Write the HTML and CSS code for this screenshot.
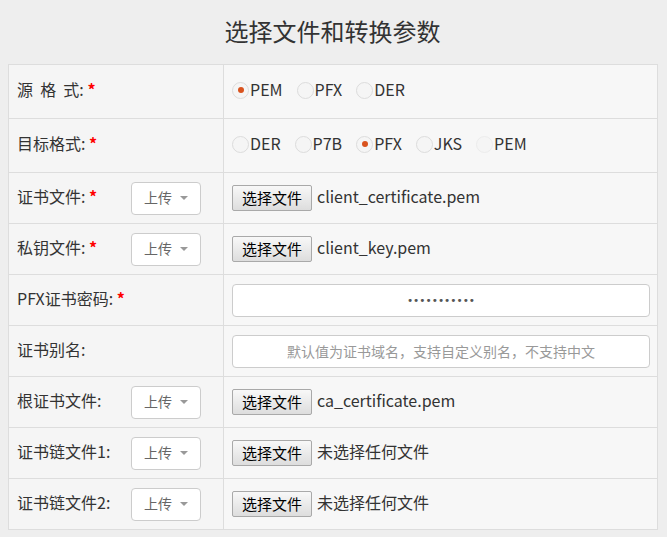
FILE: index.html
```html
<!DOCTYPE html>
<html lang="zh-CN">
<head>
    <meta charset="UTF-8">
    <meta name="viewport" content="width=device-width, initial-scale=1.0">
    <title>选择文件和转换参数</title>
    <link rel="stylesheet" href="styles.css">
</head>
<body>
    <h2 class="page-title">选择文件和转换参数</h2>

    <table class="form-table">
        <tr class="tall">
            <td class="label-cell"><span class="label">源&nbsp;&nbsp;格&nbsp;&nbsp;式: <span class="req">*</span></span></td>
            <td class="field-cell">
                <div class="radio-group">
                    <label class="radio"><span class="dot checked"></span>PEM</label>
                    <label class="radio"><span class="dot"></span>PFX</label>
                    <label class="radio"><span class="dot"></span>DER</label>
                </div>
            </td>
        </tr>
        <tr class="tall">
            <td class="label-cell"><span class="label">目标格式: <span class="req">*</span></span></td>
            <td class="field-cell">
                <div class="radio-group">
                    <label class="radio"><span class="dot"></span>DER</label>
                    <label class="radio"><span class="dot"></span>P7B</label>
                    <label class="radio"><span class="dot checked"></span>PFX</label>
                    <label class="radio"><span class="dot"></span>JKS</label>
                    <label class="radio"><span class="dot faint"></span>PEM</label>
                </div>
            </td>
        </tr>
        <tr>
            <td class="label-cell">
                <div class="label-row">
                    <span class="label">证书文件: <span class="req">*</span></span>
                    <div class="upload-select">上传 <span class="caret"></span></div>
                </div>
            </td>
            <td class="field-cell">
                <div class="file-row"><button class="file-btn">选择文件</button><span class="file-name">client_certificate.pem</span></div>
            </td>
        </tr>
        <tr>
            <td class="label-cell">
                <div class="label-row">
                    <span class="label">私钥文件: <span class="req">*</span></span>
                    <div class="upload-select">上传 <span class="caret"></span></div>
                </div>
            </td>
            <td class="field-cell">
                <div class="file-row"><button class="file-btn">选择文件</button><span class="file-name">client_key.pem</span></div>
            </td>
        </tr>
        <tr>
            <td class="label-cell"><span class="label">PFX证书密码: <span class="req">*</span></span></td>
            <td class="field-cell">
                <input class="text-input password" type="password" value="12345678901">
            </td>
        </tr>
        <tr>
            <td class="label-cell"><span class="label">证书别名:</span></td>
            <td class="field-cell">
                <input class="text-input" type="text" placeholder="默认值为证书域名，支持自定义别名，不支持中文">
            </td>
        </tr>
        <tr>
            <td class="label-cell">
                <div class="label-row">
                    <span class="label">根证书文件:</span>
                    <div class="upload-select">上传 <span class="caret"></span></div>
                </div>
            </td>
            <td class="field-cell">
                <div class="file-row"><button class="file-btn">选择文件</button><span class="file-name">ca_certificate.pem</span></div>
            </td>
        </tr>
        <tr>
            <td class="label-cell">
                <div class="label-row">
                    <span class="label">证书链文件1:</span>
                    <div class="upload-select">上传 <span class="caret"></span></div>
                </div>
            </td>
            <td class="field-cell">
                <div class="file-row"><button class="file-btn">选择文件</button><span class="file-name">未选择任何文件</span></div>
            </td>
        </tr>
        <tr>
            <td class="label-cell">
                <div class="label-row">
                    <span class="label">证书链文件2:</span>
                    <div class="upload-select">上传 <span class="caret"></span></div>
                </div>
            </td>
            <td class="field-cell">
                <div class="file-row"><button class="file-btn">选择文件</button><span class="file-name">未选择任何文件</span></div>
            </td>
        </tr>
    </table>
</body>
</html>
```

FILE: styles.css
```css
* {
    margin: 0;
    padding: 0;
    box-sizing: border-box;
}

body {
    background-color: #eeeeee;
    font-family: "Noto Sans CJK SC", "Noto Sans", sans-serif;
    color: #333;
    padding: 0 10px 0 8px;
}

.page-title {
    height: 64px;
    line-height: 62px;
    text-align: center;
    font-size: 24px;
    font-weight: normal;
    color: #333;
}

.form-table {
    width: 650px;
    border-collapse: collapse;
    border: 1px solid #dddddd;
}

.form-table td {
    border: 1px solid #dddddd;
    height: 51px;
    vertical-align: middle;
}

.form-table tr.tall td {
    height: 54px;
}

.label-cell {
    width: 215px;
    background-color: #f5f5f5;
    padding: 0 0 0 8px;
}

.field-cell {
    background-color: #f7f7f7;
    padding: 0 7px 0 8px;
}

.label {
    display: inline-block;
    font-size: 16px;
    color: #333;
    padding-bottom: 5px;
}

.req {
    color: #ff0000;
    font-weight: bold;
}

.label-row {
    display: flex;
    align-items: center;
}

.label-row .label {
    width: 114px;
}

.upload-select {
    width: 70px;
    height: 33px;
    background: #fff;
    border: 1px solid #cccccc;
    border-radius: 4px;
    font-size: 14px;
    color: #666;
    display: flex;
    align-items: center;
    padding: 0 0 2px 12px;
    gap: 8px;
}

.caret {
    width: 0;
    height: 0;
    margin-top: 2px;
    border-left: 4px solid transparent;
    border-right: 4px solid transparent;
    border-top: 4px solid #999;
}

/* radios */
.radio-group {
    display: flex;
    align-items: center;
    gap: 14px;
    padding-bottom: 5px;
}

.radio {
    display: flex;
    align-items: center;
    font-size: 16px;
    color: #333;
}

.dot {
    width: 17px;
    height: 17px;
    border: 1px solid #dcdcdc;
    border-radius: 50%;
    background: #f5f5f5;
    margin: 2px 1px 0 0;
    display: flex;
    justify-content: center;
    align-items: center;
}

.dot.checked::after {
    content: "";
    width: 6px;
    height: 6px;
    border-radius: 50%;
    background: #d9531e;
}

.dot.faint {
    border-color: #ececec;
}

/* file inputs */
.file-row {
    display: flex;
    align-items: center;
}

.file-btn {
    width: 80px;
    height: 26px;
    font-family: "Noto Sans CJK SC", sans-serif;
    font-size: 15px;
    color: #000;
    background: linear-gradient(#f8f8f8, #dddddd);
    border: 1px solid #a9a9a9;
    border-radius: 2px;
    margin-right: 5px;
    padding-bottom: 2px;
}

.file-name {
    font-size: 16px;
    color: #333;
    padding-bottom: 5px;
}

.text-input {
    width: 100%;
    height: 33px;
    background: #fff;
    border: 1px solid #cccccc;
    border-radius: 4px;
    text-align: center;
    font-family: "Noto Sans CJK SC", sans-serif;
    font-size: 14px;
    color: #555;
    outline: none;
}

.text-input.password {
    font-family: "DejaVu Sans", sans-serif;
    font-size: 10.5px;
    letter-spacing: 0;
}

.text-input::placeholder {
    color: #999;
}
```
